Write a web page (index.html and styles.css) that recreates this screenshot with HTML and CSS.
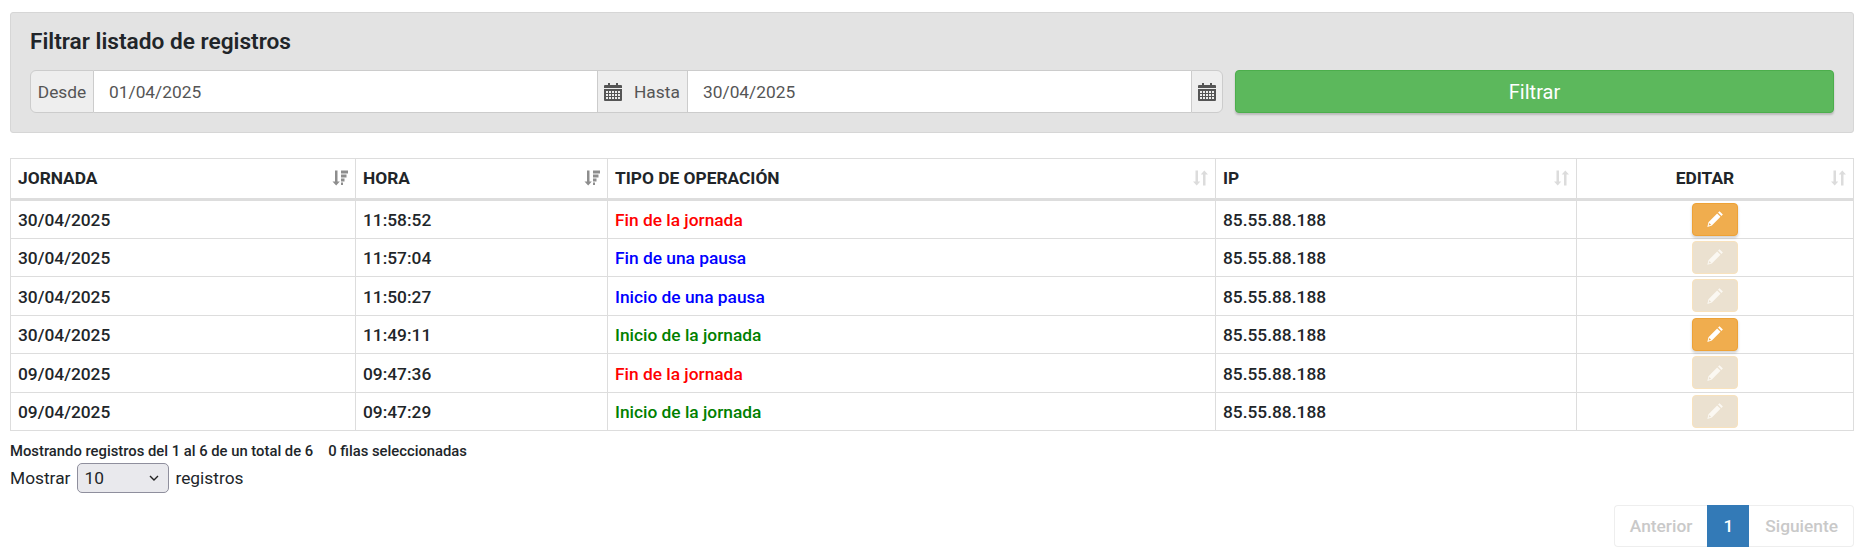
FILE: index.html
```html
<!DOCTYPE html>
<html lang="es">
<head>
<meta charset="utf-8">
<title>Registros</title>
<link rel="stylesheet" href="styles.css">
</head>
<body>
<svg class="defs" width="0" height="0" aria-hidden="true">
  <symbol id="cal" viewBox="0 0 18 18"><path d="M4 0h2v2h6V0h2v2h3a1 1 0 0 1 1 1v2H0V3a1 1 0 0 1 1-1h3zM0 6h18v11a1 1 0 0 1-1 1H1a1 1 0 0 1-1-1z"/><path class="cal-grid" d="M2 8h2v2H2zM5 8h2v2H5zM8 8h2v2H8zM11 8h2v2h-2zM14 8h2v2h-2zM2 11h2v2H2zM5 11h2v2H5zM8 11h2v2H8zM11 11h2v2h-2zM14 11h2v2h-2zM2 14h2v2H2zM5 14h2v2H5zM8 14h2v2H8zM11 14h2v2h-2zM14 14h2v2h-2z"/></symbol>
  <symbol id="sort-desc" viewBox="0 0 16 16"><path d="M3 .5h2.500v11h2.300L4.200 15.500.5 11.500H3zM9 .5h7v3H9zM9 4.500h5.500v3H9zM9 8.500h3.500v3H9zM9 12.500h2v2.500H9z"/></symbol>
  <symbol id="sort-none" viewBox="0 0 16 16"><path d="M3.500 .5H6v11h2.300L4.700 15.500 1 11.500h2.500zM11 15.500h2.500V4.500H16L12.300.5 8.700 4.500H11z"/></symbol>
  <symbol id="pencil" viewBox="0 0 16 16"><path d="M12 1l3 3-1.300 1.300-3-3zM9.900 3.100l3 3-7.700 7.700-4 1.200 1-4.200zM3 11.500l-.7 2.200 2.200-.7z"/></symbol>
</svg>

<section class="panel">
  <h1 class="panel-title">Filtrar listado de registros</h1>
  <div class="filter-row">
    <div class="date-group">
      <span class="addon addon-first">Desde</span>
      <input class="date-input" type="text" value="01/04/2025">
      <span class="addon addon-icon"><svg class="cal-icon"><use href="#cal"/></svg></span>
      <span class="addon addon-mid">Hasta</span>
      <input class="date-input" type="text" value="30/04/2025">
      <span class="addon addon-last"><svg class="cal-icon"><use href="#cal"/></svg></span>
    </div>
    <button class="btn-filter" type="button">Filtrar</button>
  </div>
</section>

<table class="records">
  <colgroup>
    <col class="col-a"><col class="col-b"><col class="col-c"><col class="col-d"><col class="col-e">
  </colgroup>
  <thead>
    <tr>
      <th>JORNADA<svg class="sort sort-on"><use href="#sort-desc"/></svg></th>
      <th>HORA<svg class="sort sort-on"><use href="#sort-desc"/></svg></th>
      <th>TIPO DE OPERACIÓN<svg class="sort"><use href="#sort-none"/></svg></th>
      <th>IP<svg class="sort"><use href="#sort-none"/></svg></th>
      <th class="center head-edit">EDITAR<svg class="sort"><use href="#sort-none"/></svg></th>
    </tr>
  </thead>
  <tbody>
    <tr><td>30/04/2025</td><td>11:58:52</td><td class="red">Fin de la jornada</td><td>85.55.88.188</td><td class="center cell-btn"><button class="btn-edit" type="button"><svg class="pencil-icon"><use href="#pencil"/></svg></button></td></tr>
    <tr><td>30/04/2025</td><td>11:57:04</td><td class="blue">Fin de una pausa</td><td>85.55.88.188</td><td class="center cell-btn"><button class="btn-edit off" type="button"><svg class="pencil-icon"><use href="#pencil"/></svg></button></td></tr>
    <tr><td>30/04/2025</td><td>11:50:27</td><td class="blue">Inicio de una pausa</td><td>85.55.88.188</td><td class="center cell-btn"><button class="btn-edit off" type="button"><svg class="pencil-icon"><use href="#pencil"/></svg></button></td></tr>
    <tr><td>30/04/2025</td><td>11:49:11</td><td class="green">Inicio de la jornada</td><td>85.55.88.188</td><td class="center cell-btn"><button class="btn-edit" type="button"><svg class="pencil-icon"><use href="#pencil"/></svg></button></td></tr>
    <tr><td>09/04/2025</td><td>09:47:36</td><td class="red">Fin de la jornada</td><td>85.55.88.188</td><td class="center cell-btn"><button class="btn-edit off" type="button"><svg class="pencil-icon"><use href="#pencil"/></svg></button></td></tr>
    <tr><td>09/04/2025</td><td>09:47:29</td><td class="green">Inicio de la jornada</td><td>85.55.88.188</td><td class="center cell-btn"><button class="btn-edit off" type="button"><svg class="pencil-icon"><use href="#pencil"/></svg></button></td></tr>
  </tbody>
</table>

<p class="info"><span>Mostrando registros del 1 al 6 de un total de 6</span><span class="info-sel">0 filas seleccionadas</span></p>
<div class="length">
  <span>Mostrar</span>
  <span class="select-wrap">
    <select class="length-select"><option>10</option><option>25</option><option>50</option></select>
    <svg class="chev" viewBox="0 0 10 6"><path d="M1 1l4 4 4-4" fill="none" stroke="#222" stroke-width="1.400"/></svg>
  </span>
  <span>registros</span>
</div>
<nav class="pager">
  <a class="page">Anterior</a>
  <a class="page current">1</a>
  <a class="page">Siguiente</a>
</nav>
</body>
</html>
```
FILE: styles.css
```css
* { box-sizing: border-box; }
html, body { height: 100%; }
body {
  margin: 0;
  padding: 12px 13px 0 10px;
  background: #fff;
  color: #212529;
  font-family: Roboto, "Liberation Sans", sans-serif;
  font-size: 17.330px;
  overflow: hidden;
}
.defs { position: absolute; }

.panel {
  height: 121px;
  padding: 15px 19px 0;
  background: #e3e3e3;
  border: 1px solid #d6d6d6;
  border-radius: 3px;
}
.panel-title {
  margin: 0 0 14px;
  font-size: 22.670px;
  line-height: 28px;
  font-weight: 600;
  color: #212529;
}
.filter-row { display: flex; gap: 12px; }
.date-group { display: flex; width: 1193px; height: 43px; }
.addon {
  display: flex;
  align-items: center;
  justify-content: center;
  background: #eee;
  border: 1px solid #ccc;
  color: #555;
  font-size: 17.330px;
}
.addon-first { width: 64px; border-radius: 6px 0 0 6px; }
.addon-icon { width: 33px; border-left: 1px solid #ccc; border-right: 0; padding-right: 3px; }
.addon-mid { width: 58px; border-left: 0; justify-content: flex-start; padding-left: 4px; }
.addon-last { width: 32px; border-left: 1px solid #ccc; border-radius: 0 6px 6px 0; }
.date-input {
  flex: 1;
  min-width: 0;
  height: 43px;
  padding: 0 15px;
  background: #fff;
  border: 1px solid #ccc;
  border-left: 0;
  border-right: 0;
  color: #555;
  font: 17.330px Roboto, sans-serif;
}
.cal-icon { width: 18px; height: 18px; fill: #555; }
.cal-grid { fill: #eee; }
.btn-filter {
  flex: 1;
  height: 43px;
  background: #5cb85c;
  border: 1px solid #4cae4c;
  border-radius: 4px;
  color: #fff;
  font: 20px Roboto, sans-serif;
  box-shadow: 0 2px 2px rgba(0, 0, 0, .18);
}

.records {
  width: 100%;
  margin-top: 25px;
  border-collapse: collapse;
  table-layout: fixed;
}
.col-a { width: 345px; }
.col-b { width: 252px; }
.col-c { width: 608px; }
.col-d { width: 361px; }
.records th, .records td {
  position: relative;
  border: 1px solid #ddd;
  padding: 0 7px;
  text-align: left;
}
.records th {
  height: 41px;
  border-bottom: 3px solid #ddd;
  font-weight: 700;
  padding-bottom: 2px;
}
.records td { height: 38.500px; padding-top: 2px; font-weight: 500; }
.records .cell-btn { padding-top: 0; }
.records .center { text-align: center; }
.records .head-edit { padding-right: 27px; }
.sort {
  position: absolute;
  right: 7px;
  top: 10px;
  width: 16px;
  height: 18px;
  fill: #dcdcdc;
}
.sort-on { fill: #8d8d8d; }
.red { color: #f00; }
.blue { color: #00f; }
.green { color: #008000; }

.btn-edit {
  display: block;
  width: 46px;
  height: 33px;
  margin: 0 auto;
  padding: 0;
  background: #f0ad4e;
  border: 1px solid #eea236;
  border-radius: 4px;
  box-shadow: 0 2px 3px rgba(0, 0, 0, .18);
}
.btn-edit.off {
  background: #ebe1d0;
  border-color: #f8e2bd;
  box-shadow: none;
}
.pencil-icon { display: block; width: 18px; height: 18px; margin: 0 auto; fill: #fff; }
.off .pencil-icon { fill: #fbf8f2; }

.info {
  margin: 12px 0 0;
  font-size: 14.800px;
  line-height: 17px;
  font-weight: 500;
}
.info-sel { margin-left: 15px; }
.length { display: flex; align-items: center; gap: 6px; margin-top: 2px; height: 31px; }
.select-wrap { position: relative; display: block; width: 92px; height: 30px; margin-left: 1px; }
.length-select {
  appearance: none;
  display: block;
  width: 100%;
  height: 100%;
  padding: 0 20px 0 6px;
  background: #e9e9ed;
  border: 1px solid #8f8f9d;
  border-radius: 5px;
  color: #212529;
  font: 17.330px Roboto, sans-serif;
}
.chev { position: absolute; right: 10px; top: 12px; width: 10px; height: 6px; pointer-events: none; }

.pager {
  display: flex;
  justify-content: flex-end;
  margin-top: 12px;
}
.page {
  display: flex;
  align-items: center;
  height: 42px;
  padding: 0 15px;
  color: #c9c9c9;
  border: 1px solid #eee;
  font-weight: 500;
}
.page:first-child { border-right: 0; border-radius: 4px 0 0 4px; }
.page:last-child { padding-left: 16px; border-left: 0; border-radius: 0 4px 4px 0; }
.page.current { background: #337ab7; border-color: #337ab7; color: #fff; }
```
